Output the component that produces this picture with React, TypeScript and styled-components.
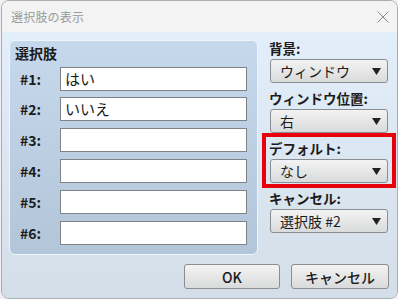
import React from "react";
import styled, { createGlobalStyle } from "styled-components";

const Global = createGlobalStyle`
  html, body { margin: 0; padding: 0; }
  body {
    background: #f3eef3;
    font-family: "Noto Sans CJK JP", "Noto Sans", sans-serif;
    color: #1b1b1b;
  }
`;

const Window = styled.div`
  box-sizing: border-box;
  margin-left: 1px;
  width: 397px;
  height: 299px;
  border: 1px solid #a9adb2;
  border-radius: 8px;
  overflow: hidden;
  display: flex;
  flex-direction: column;
  background: #f3f3f3;
`;

const TitleBar = styled.div`
  height: 31px;
  flex: none;
  display: flex;
  align-items: center;
  justify-content: space-between;
  padding: 0 8px 0 9px;
  background: #f3f3f3;
`;

const Title = styled.span`
  font-size: 12px;
  color: #9a9a9a;
  letter-spacing: 0.2px;
`;

const Body = styled.div`
  flex: 1;
  display: flex;
  flex-direction: column;
  padding: 6px 8px 8px 7px;
  background: linear-gradient(#e2eefa, #d3dee8);
`;

const Main = styled.div`
  display: flex;
  gap: 11px;
  align-items: flex-start;
`;

const Panel = styled.div`
  box-sizing: border-box;
  flex: none;
  margin-top: 2px;
  width: 249px;
  height: 215px;
  border: 1px solid #eef4fa;
  border-radius: 6px;
  background: linear-gradient(#c6d8eb, #b3c6d9);
  padding: 2px 10px 0 5px;
`;

const PanelTitle = styled.div`
  font-size: 14px;
  font-weight: 700;
  line-height: 20px;
`;

const Rows = styled.div`
  margin-top: 3.7px;
  display: flex;
  flex-direction: column;
  gap: 6.8px;
`;

const Row = styled.div`
  display: flex;
  align-items: center;
  height: 24px;
`;

const RowLabel = styled.span`
  box-sizing: border-box;
  flex: none;
  width: 45px;
  padding-left: 5px;
  font-size: 14px;
  font-weight: 700;
`;

const Field = styled.div`
  box-sizing: border-box;
  flex: none;
  width: 187px;
  height: 24px;
  border: 1px solid #7e8388;
  background: #fff;
  font-size: 15px;
  line-height: 22px;
  padding-left: 4px;
`;

const Side = styled.div`
  flex: none;
  width: 119px;
  display: flex;
  flex-direction: column;
  gap: 5px;
`;

const Group = styled.div`
  position: relative;
  display: flex;
  flex-direction: column;
`;

const GroupLabel = styled.span`
  font-size: 13.5px;
  font-weight: 700;
  line-height: 21px;
`;

const Highlight = styled.span`
  position: absolute;
  top: -5px;
  bottom: -5px;
  left: -7px;
  right: -8px;
  border: 4px solid #e8000b;
  pointer-events: none;
`;

const Select = styled.div`
  box-sizing: border-box;
  margin-left: 1px;
  height: 24px;
  border: 1px solid #8b8d90;
  border-radius: 3px;
  background: linear-gradient(#f3f3f3, #d9dadb);
  display: flex;
  align-items: center;
  justify-content: space-between;
  padding: 0 6px 0 9px;
  font-size: 14px;
`;

const Footer = styled.div`
  margin-top: 9px;
  display: flex;
  justify-content: flex-end;
  gap: 11px;
`;

const Button = styled.div<{ $w: number }>`
  box-sizing: border-box;
  width: ${(p) => p.$w}px;
  height: 25px;
  border: 1px solid #8b8d90;
  border-radius: 3px;
  background: linear-gradient(#f3f3f3, #d9dadb);
  display: flex;
  align-items: center;
  justify-content: center;
  font-size: 14px;
  font-weight: 500;
`;

const Arrow = () => (
  <svg width="9" height="8" viewBox="0 0 9 8">
    <polygon points="0,1 9,1 4.5,8" fill="#222" />
  </svg>
);

const CloseIcon = () => (
  <svg width="12" height="12" viewBox="0 0 12 12">
    <path d="M0.5 0.5 L11.5 11.5 M11.5 0.5 L0.5 11.5" stroke="#8a8a8a" strokeWidth="1" fill="none" />
  </svg>
);

const rows = ["はい", "いいえ", "", "", "", ""];

const groups = [
  { label: "背景:", value: "ウィンドウ" },
  { label: "ウィンドウ位置:", value: "右" },
  { label: "デフォルト:", value: "なし", hl: true },
  { label: "キャンセル:", value: "選択肢 #2" },
];

export default function App() {
  return (
    <>
      <Global />
      <Window>
        <TitleBar>
          <Title>選択肢の表示</Title>
          <CloseIcon />
        </TitleBar>
        <Body>
          <Main>
            <Panel>
              <PanelTitle>選択肢</PanelTitle>
              <Rows>
                {rows.map((r, i) => (
                  <Row key={i}>
                    <RowLabel>#{i + 1}:</RowLabel>
                    <Field>{r}</Field>
                  </Row>
                ))}
              </Rows>
            </Panel>
            <Side>
              {groups.map((g) => (
                <Group key={g.label}>
                  <GroupLabel>{g.label}</GroupLabel>
                  <Select>
                    <span>{g.value}</span>
                    <Arrow />
                  </Select>
                  {g.hl && <Highlight />}
                </Group>
              ))}
            </Side>
          </Main>
          <Footer>
            <Button $w={96}>OK</Button>
            <Button $w={98}>キャンセル</Button>
          </Footer>
        </Body>
      </Window>
    </>
  );
}
